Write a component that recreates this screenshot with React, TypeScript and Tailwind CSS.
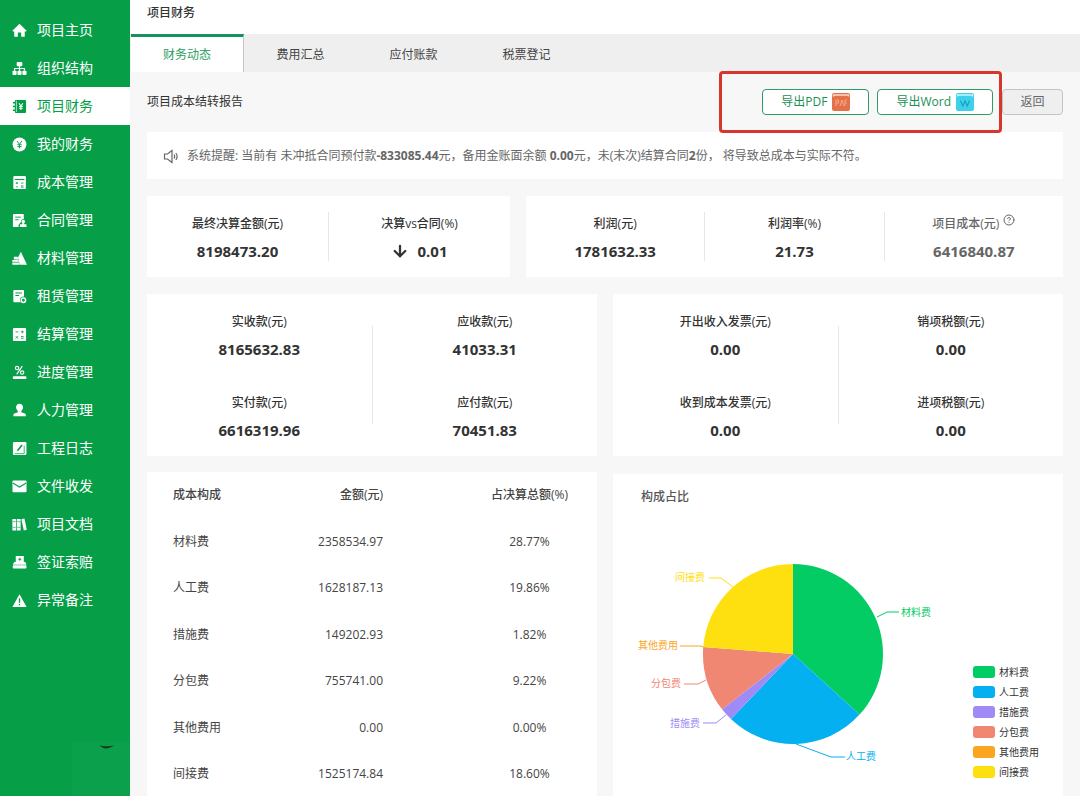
import React, { useState } from 'react';
import { ArrowDown, CircleHelp } from 'lucide-react';

const GREEN = '#069f48';

type IconName =
  | 'home' | 'org' | 'ledger' | 'yen' | 'calc' | 'contract' | 'material' | 'lease'
  | 'settle' | 'progress' | 'person' | 'log' | 'mail' | 'books' | 'claim' | 'warn';

const icons: Record<IconName, React.ReactNode> = {
  home: <path d="M8 .8 15.6 8.2 14.8 9H13.6V14.6H9.8V10.2H6.2V14.6H2.4V9H1.2L.4 8.2Z" strokeLinejoin="round" />,
  org: (
    <>
      <rect x="5" y="1" width="6" height="4.6" rx="1" />
      <path d="M7.4 5.4h1.2v2h5.2v3h-1.2V8.6H8.6v2H7.4v-2h-4v1.8H2.2v-3h5.2z" />
      <rect x=".5" y="10.3" width="4.4" height="4.5" rx="1" />
      <rect x="5.8" y="10.3" width="4.4" height="4.5" rx="1" />
      <rect x="11.1" y="10.3" width="4.4" height="4.5" rx="1" />
    </>
  ),
  ledger: (
    <>
      <rect x="3" y="1" width="12" height="14" rx="1.2" />
      <path d="M1 4h3.5M1 8h3.5M1 12h3.5" stroke={GREEN} strokeWidth="1.4" />
      <path d="M4.7 2v12" stroke="#fff" strokeWidth=".7" />
      <path d="m7.4 4.6 2.1 3 2.1-3M9.5 7.6v4M7.6 8h3.8M7.6 9.8h3.8" stroke="#fff" strokeWidth="1.1" fill="none" />
    </>
  ),
  yen: (
    <>
      <circle cx="8" cy="8" r="7.4" />
      <path d="m5.4 4.2 2.6 3.6 2.6-3.6M8 7.8v4.4M5.7 8.2h4.6M5.7 10.2h4.6" stroke={GREEN} strokeWidth="1" fill="none" />
    </>
  ),
  calc: (
    <>
      <rect x="1.4" y="1" width="13.4" height="14" rx="1.2" />
      <path d="M3 4.8h10.2" stroke={GREEN} strokeWidth="1.2" />
      <path d="M4 8.6h2.4M5.2 7.4v2.4M9.6 8.6h2.6M4.2 12.6h2M9.6 11.6h2.6M9.6 13h2.6" stroke={GREEN} strokeWidth=".9" />
    </>
  ),
  contract: (
    <>
      <path d="M2 1h9.6a1 1 0 0 1 1 1v4.4a3 3 0 0 0-3 3.2L7 12.4V15H2a1 1 0 0 1-1-1V2a1 1 0 0 1 1-1z" />
      <path d="M3.4 4.4h6M3.4 7.2h3.6" stroke={GREEN} strokeWidth="1" />
      <path d="M12 7.2a1.9 1.9 0 0 1 1 3.5v1.4h2.4V15H8.4v-2.9H11v-1.4a1.9 1.9 0 0 1 1-3.5z" />
    </>
  ),
  material: (
    <>
      <path d="M9.4.8 16 14.6H8.2L6.400 7z" />
      <path d="M2 6h4l.8 3H2zM.4 9.600h6.500l1 5H.4z" />
      <path d="M.4 12h7" stroke={GREEN} strokeWidth=".8" />
    </>
  ),
  lease: (
    <>
      <path d="M2.4 1h9.4a1 1 0 0 1 1 1v6.2a3.6 3.6 0 0 0-3.6 5.8H2.4a1 1 0 0 1-1-1V2a1 1 0 0 1 1-1z" />
      <path d="M3.6 4.2h7M3.6 7h4" stroke={GREEN} strokeWidth="1.1" />
      <circle cx="12.2" cy="12" r="2.3" fill="none" stroke="currentColor" strokeWidth="1.6" />
    </>
  ),
  settle: (
    <>
      <rect x="1" y="1" width="14" height="14" rx="1.2" />
      <path d="M3.8 5.2h2.8M9.6 5.2h2.8M11 3.8v2.8M4 9.8l2.4 2.4M6.4 9.8 4 12.2M9.6 10.2h2.8M9.6 12h2.8" stroke={GREEN} strokeWidth=".9" />
    </>
  ),
  progress: (
    <>
      <g fill="none" stroke="currentColor" strokeWidth="1.2">
        <circle cx="5.4" cy="3.2" r="1.8" />
        <circle cx="10.8" cy="8" r="1.8" />
        <path d="M11 1.2 5 10" />
      </g>
      <rect x=".8" y="12" width="14.6" height="3" rx="1.2" />
    </>
  ),
  person: (
    <path d="M8 .8c2.3 0 3.8 1.6 3.8 3.8 0 1.6-.8 3-1.9 3.8v1.4l3.8 1.4c.7.3 1 .8 1 1.5v1.5H1.5v-1.5c0-.7.4-1.2 1-1.5l3.7-1.4V8.4A4.6 4.6 0 0 1 4.3 4.6C4.3 2.4 5.7.8 8 .8z" />
  ),
  log: (
    <>
      <rect x="1" y="1" width="14.4" height="14" rx="1.4" />
      <path d="m5.2 11.2.6-2.2 4.2-5.2 1.4 1.1-4.2 5.2z" fill={GREEN} />
      <path d="M13 5v8.5H3" stroke={GREEN} strokeWidth=".8" fill="none" />
    </>
  ),
  mail: (
    <>
      <rect x=".5" y="1.6" width="15" height="12.4" rx="1" />
      <path d="M.8 4.2 8 8.600l7.2-4.400" stroke={GREEN} strokeWidth="1.1" fill="none" />
    </>
  ),
  books: (
    <>
      <path d="M.4 2h4v12.4h-4zM5.2 2h4v12.4h-4z" />
      <path d="m10 2.4 3.2-.7 2.6 12-3.2.7z" />
      <path d="M.8 5h3.2M5.6 5h3.2M.8 11h3.2M5.6 11h3.2" stroke={GREEN} strokeWidth=".7" />
    </>
  ),
  claim: (
    <>
      <path d="M4 1h8.6v6.5h1.6l1.2 2.8H.8L2.4 7.5H4z" />
      <rect x=".8" y="11" width="14.6" height="3.4" rx=".8" />
      <path d="M8.3 3v3M6.800 4.5h3" stroke={GREEN} strokeWidth="1.1" />
    </>
  ),
  warn: (
    <>
      <path d="M8 1.2 15.6 14.8H.4z" strokeLinejoin="round" />
      <path d="M8 5.6v4.800M8 11.6v1.5" stroke={GREEN} strokeWidth="1.4" />
    </>
  ),
};

const menu: { label: string; icon: IconName }[] = [
  { label: '项目主页', icon: 'home' },
  { label: '组织结构', icon: 'org' },
  { label: '项目财务', icon: 'ledger' },
  { label: '我的财务', icon: 'yen' },
  { label: '成本管理', icon: 'calc' },
  { label: '合同管理', icon: 'contract' },
  { label: '材料管理', icon: 'material' },
  { label: '租赁管理', icon: 'lease' },
  { label: '结算管理', icon: 'settle' },
  { label: '进度管理', icon: 'progress' },
  { label: '人力管理', icon: 'person' },
  { label: '工程日志', icon: 'log' },
  { label: '文件收发', icon: 'mail' },
  { label: '项目文档', icon: 'books' },
  { label: '签证索赔', icon: 'claim' },
  { label: '异常备注', icon: 'warn' },
];

const tabs = ['财务动态', '费用汇总', '应付账款', '税票登记'];

// Leader line and label position belong to each slice of the pie
const costs = [
  { name: '材料费', amount: 2358534.97, percent: '28.77%', color: '#04cc64', line: '264,77 274,72 286,72', x: 288, y: 76, anchor: 'start' },
  { name: '人工费', amount: 1628187.13, percent: '19.86%', color: '#04b0f0', line: '183,204 218,217 232,217', x: 233, y: 220, anchor: 'start' },
  { name: '措施费', amount: 149202.93, percent: '1.82%', color: '#a08af5', line: '113,175 103,183 90,183', x: 87, y: 187, anchor: 'end' },
  { name: '分包费', amount: 755741, percent: '9.22%', color: '#f08773', line: '93,140 85,144 71,144', x: 68, y: 147, anchor: 'end' },
  { name: '其他费用', amount: 0, percent: '0.00%', color: '#fba61f', line: '91,107 87,106 67,106', x: 65, y: 109, anchor: 'end' },
  { name: '间接费', amount: 1525174.84, percent: '18.60%', color: '#fee011', line: '120,47 108,38 96,38', x: 92, y: 41, anchor: 'end' },
] as const;

const Sidebar: React.FC = () => (
  <nav className="flex w-[130px] shrink-0 flex-col bg-[#069f48] pt-[11px]">
    {menu.map(({ label, icon }) => (
      <a
        key={label}
        href="#"
        className={
          icon === 'ledger'
            ? 'flex h-[38px] shrink-0 items-center gap-[10px] bg-white pl-3 text-sm text-[#069f48]'
            : 'flex h-[38px] shrink-0 items-center gap-[10px] pl-3 text-sm text-white'
        }
      >
        <svg viewBox="0 0 16 16" fill="currentColor" className="h-[15px] w-[15px]" aria-hidden="true">
          {icons[icon]}
        </svg>
        {label}
      </a>
    ))}
    <div className="mt-auto ml-auto h-[54px] w-[58px] bg-[#0ba14c] pt-[3px] pl-[27px]">
      <svg viewBox="0 0 16 4" className="h-1 w-4" aria-hidden="true">
        <path d="M0 .5C5 1.5 10 1.5 16 .5 12 2 10 3.5 7 3.5S3 2 0 .5z" fill="#173d22" />
      </svg>
    </div>
  </nav>
);

const Metric: React.FC<{ label: string; children: React.ReactNode; muted?: boolean }> = ({ label, children, muted }) => (
  <div className={muted ? 'pt-[18px] pb-4 text-center text-[#666]' : 'pt-[18px] pb-4 text-center text-[#333]'}>
    <div className="flex h-5 justify-center text-xs leading-5 font-medium">
      {label}
      {muted && <CircleHelp className="ml-1 h-3 w-3" strokeWidth={2} />}
    </div>
    <div className="mt-[7px] flex h-5 items-center justify-center gap-2 text-[15px] leading-5 font-bold">{children}</div>
  </div>
);

const Divider: React.FC = () => <div className="my-4 w-px bg-[#e6e6e6]" />;

const MetricPairs: React.FC<{ left: string[][]; right: string[][] }> = ({ left, right }) => (
  <section className="grid grid-cols-[1fr_1px_1fr] bg-white">
    <div>
      {left.map(([label, value]) => <Metric key={label} label={label}>{value}</Metric>)}
    </div>
    <div className="my-8 bg-[#e6e6e6]" />
    <div>
      {right.map(([label, value]) => <Metric key={label} label={label}>{value}</Metric>)}
    </div>
  </section>
);

const CX = 180;
const CY = 114;
const R = 90;

const CostPie: React.FC = () => {
  const total = costs.reduce((sum, c) => sum + c.amount, 0);
  let acc = 0;
  const slices = costs.map((c) => {
    const from = (acc / total) * Math.PI * 2;
    acc += c.amount;
    const to = (acc / total) * Math.PI * 2;
    const large = to - from > Math.PI ? 1 : 0;
    const d = `M${CX} ${CY}L${CX + R * Math.sin(from)} ${CY - R * Math.cos(from)}A${R} ${R} 0 ${large} 1 ${CX + R * Math.sin(to)} ${CY - R * Math.cos(to)}Z`;
    return { ...c, d };
  });

  return (
    <svg viewBox="0 0 360 242" className="h-[242px] w-[360px] shrink-0" role="img" aria-label="构成占比">
      {slices.map((s) => (
        <g key={s.name}>
          {s.amount > 0 && <path d={s.d} fill={s.color} />}
          <polyline points={s.line} fill="none" stroke={s.color} />
          <text x={s.x} y={s.y} textAnchor={s.anchor} fill={s.color} className="text-[10px]">{s.name}</text>
        </g>
      ))}
    </svg>
  );
};

const App: React.FC = () => {
  const [activeTab, setActiveTab] = useState(tabs[0]);

  return (
    <div className="flex h-screen overflow-hidden bg-[#f7f7f7] font-['Open_Sans','Noto_Sans_CJK_SC',sans-serif] text-xs text-[#333]">
      <Sidebar />
      <main className="min-w-0 flex-1">
        <h1 className="h-[34px] bg-white pl-[17px] text-xs leading-[26px] font-medium">项目财务</h1>

        <div className="flex h-[38px] bg-[#efefef] pl-px">
          {tabs.map((tab) => (
            <button
              key={tab}
              type="button"
              onClick={() => setActiveTab(tab)}
              className={
                tab === activeTab
                  ? 'w-[113px] border-t-3 border-r border-t-[#15915a] border-r-[#c4c4c4] bg-white text-[#2b9c62]'
                  : 'w-[113px] border-t-3 border-transparent text-[#444]'
              }
            >
              {tab}
            </button>
          ))}
        </div>

        <div className="px-[17px]">
          <div className="flex h-[60px] items-center">
            <h2 className="mr-auto">项目成本结转报告</h2>
            <div className="relative flex gap-2">
              <button type="button" className="flex h-[26px] items-center gap-[5px] rounded-sm border border-[#2f9c68] bg-white px-[18px] text-[#1d8f55]">
                导出PDF
                <svg viewBox="0 0 18 18" className="h-[18px] w-[18px]" aria-hidden="true">
                  <rect width="18" height="18" rx="2" fill="#e5714a" />
                  <path d="M1.5 3.5V2h15v1.5" stroke="#f9d9cd" strokeWidth="1.4" fill="none" />
                  <path d="M4 13V7h2.5v3H4M8 13l2-6 2 6M13 13V7h2M13 10h2" stroke="#f3a88e" fill="none" />
                </svg>
              </button>
              <button type="button" className="flex h-[26px] items-center gap-[5px] rounded-sm border border-[#2f9c68] bg-white px-[18px] text-[#1d8f55]">
                导出Word
                <svg viewBox="0 0 18 18" className="h-[18px] w-[18px]" aria-hidden="true">
                  <rect width="18" height="18" rx="2" fill="#3ed2ea" />
                  <path d="M1.5 3.5V2h15v1.5" stroke="#c9f5fb" strokeWidth="1.4" fill="none" />
                  <path d="m4.5 7.5 2.2 5.5L9 8l2.3 5 2.2-5.5" stroke="#1c9fc4" strokeWidth="1.2" fill="none" />
                </svg>
              </button>
              <div className="pointer-events-none absolute -top-[18px] -right-[9px] -bottom-[18px] -left-[43px] rounded-sm border-3 border-[#d8362c]" />
            </div>
            <button type="button" className="ml-[9px] h-[26px] w-[61px] rounded-sm border border-[#c4c4c4] bg-[#efefef] text-[#666]">返回</button>
          </div>

          <div className="flex h-[47px] items-center gap-2 bg-white pl-4 text-[#666]">
            <svg viewBox="0 0 16 16" fill="none" stroke="currentColor" className="h-4 w-4 shrink-0" aria-hidden="true">
              <path d="M1.5 6v5h3l4.5 3.5v-12L4.5 6z" strokeWidth="1.2" />
              <path d="M11 6.5c.8 1.2.8 2.8 0 4M12.800 5c1.5 2 1.5 5 0 7" strokeWidth="1.2" />
            </svg>
            <p>
              系统提醒: 当前有 未冲抵合同预付款<b>-833085.44</b>元，备用金账面余额 <b>0.00</b>元，未(末次)结算合同<b>2</b>份， 将导致总成本与实际不符。
            </p>
          </div>

          <div className="mt-[17px] grid grid-cols-[363fr_537fr] gap-4">
            <section className="grid grid-cols-[1fr_1px_1fr] bg-white">
              <Metric label="最终决算金额(元)">8198473.20</Metric>
              <Divider />
              <Metric label="决算vs合同(%)">
                <ArrowDown className="h-[18px] w-[18px]" strokeWidth={3} />
                0.01
              </Metric>
            </section>
            <section className="grid grid-cols-[1fr_1px_1fr_1px_1fr] bg-white">
              <Metric label="利润(元)">1781632.33</Metric>
              <Divider />
              <Metric label="利润率(%)">21.73</Metric>
              <Divider />
              <Metric label="项目成本(元)" muted>6416840.87</Metric>
            </section>
          </div>

          <div className="mt-[17px] grid grid-cols-2 gap-4">
            <MetricPairs
              left={[['实收款(元)', '8165632.83'], ['实付款(元)', '6616319.96']]}
              right={[['应收款(元)', '41033.31'], ['应付款(元)', '70451.83']]}
            />
            <MetricPairs
              left={[['开出收入发票(元)', '0.00'], ['收到成本发票(元)', '0.00']]}
              right={[['销项税额(元)', '0.00'], ['进项税额(元)', '0.00']]}
            />
          </div>

          <div className="mt-4 grid grid-cols-2 gap-4">
            <section className="bg-white">
              <table className="w-full table-fixed text-[#444]">
                <thead>
                  <tr className="h-[46px]">
                    <th className="w-[35%] pl-[26px] text-left font-medium">成本构成</th>
                    <th className="w-[35%] pr-[79px] text-right font-medium">金额(元)</th>
                    <th className="w-[30%] text-center font-medium">占决算总额(%)</th>
                  </tr>
                </thead>
                <tbody>
                  {costs.map((c) => (
                    <tr key={c.name} className="odd:h-[47px] even:h-[46px]">
                      <td className="pl-[26px]">{c.name}</td>
                      <td className="pr-[79px] text-right">{c.amount.toFixed(2)}</td>
                      <td className="text-center">{c.percent}</td>
                    </tr>
                  ))}
                </tbody>
              </table>
            </section>

            <section className="mt-[2px] bg-white">
              <h3 className="h-[66px] pt-3 pl-7 leading-[22px] font-medium text-[#555]">构成占比</h3>
              <div className="flex items-end">
                <CostPie />
                <ul className="text-[10px] leading-5 whitespace-nowrap">
                  {costs.map((c) => (
                    <li key={c.name} className="flex items-center gap-1">
                      <span className="h-3 w-[22px] rounded-[3px]" style={{ backgroundColor: c.color }} />
                      {c.name}
                    </li>
                  ))}
                </ul>
              </div>
            </section>
          </div>
        </div>
      </main>
    </div>
  );
};

export default App;
